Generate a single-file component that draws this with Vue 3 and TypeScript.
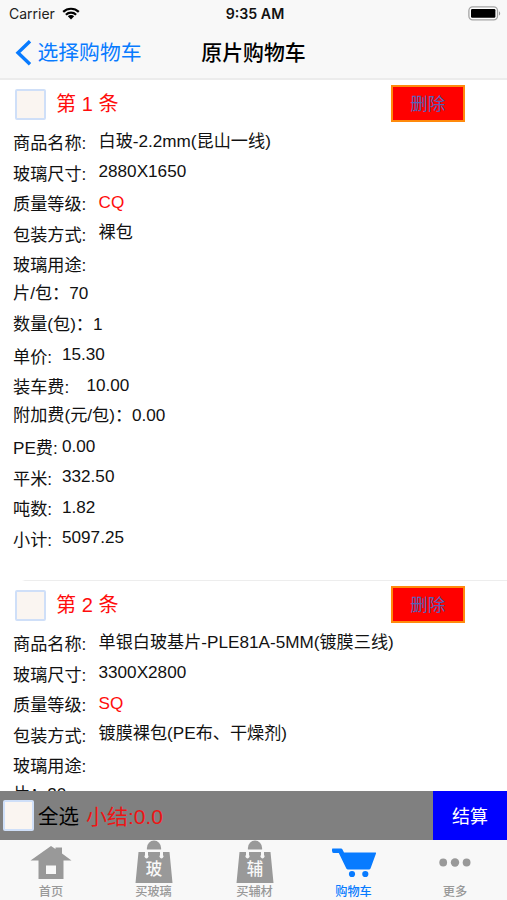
<script setup lang="ts">
import { ref } from 'vue'

interface Field {
  label: string
  value: string
  kind: 'wide' | 'narrow' | 'fee' | 'inline'
  highlight?: boolean
}

interface CartItem {
  id: number
  checked: boolean
  fields: Field[]
}

const items = ref<CartItem[]>([
  {
    id: 1,
    checked: false,
    fields: [
      { label: '商品名称:', value: '白玻-2.2mm(昆山一线)', kind: 'wide' },
      { label: '玻璃尺寸:', value: '2880X1650', kind: 'wide' },
      { label: '质量等级:', value: 'CQ', kind: 'wide', highlight: true },
      { label: '包装方式:', value: '裸包', kind: 'wide' },
      { label: '玻璃用途:', value: '', kind: 'wide' },
      { label: '片/包：', value: '70', kind: 'inline' },
      { label: '数量(包)：', value: '1', kind: 'inline' },
      { label: '单价:', value: '15.30', kind: 'narrow' },
      { label: '装车费:', value: '10.00', kind: 'fee' },
      { label: '附加费(元/包)：', value: '0.00', kind: 'inline' },
      { label: 'PE费:', value: '0.00', kind: 'narrow' },
      { label: '平米:', value: '332.50', kind: 'narrow' },
      { label: '吨数:', value: '1.82', kind: 'narrow' },
      { label: '小计:', value: '5097.25', kind: 'narrow' },
    ],
  },
  {
    id: 2,
    checked: false,
    fields: [
      { label: '商品名称:', value: '单银白玻基片-PLE81A-5MM(镀膜三线)', kind: 'wide' },
      { label: '玻璃尺寸:', value: '3300X2800', kind: 'wide' },
      { label: '质量等级:', value: 'SQ', kind: 'wide', highlight: true },
      { label: '包装方式:', value: '镀膜裸包(PE布、干燥剂)', kind: 'wide' },
      { label: '玻璃用途:', value: '', kind: 'wide' },
      { label: '片：', value: '20', kind: 'inline' },
    ],
  },
])

const allChecked = ref(false)

function toggleAll() {
  allChecked.value = !allChecked.value
  items.value.forEach((item) => (item.checked = allChecked.value))
}

function removeItem(id: number) {
  items.value = items.value.filter((item) => item.id !== id)
}

const activeTab = ref('cart')
</script>

<template>
  <div class="screen">
    <header class="top">
      <div class="status">
        <div class="carrier">
          <span>Carrier</span>
          <svg class="wifi" viewBox="0 0 18 13" width="18" height="13">
            <path d="M1.2 4.9A11.2 11.2 0 0 1 16.8 4.9M3.9 7.7A7.3 7.3 0 0 1 14.1 7.7" fill="none" stroke="#000" stroke-width="2.2" />
            <path d="M9 12.4L5.8 9.2A4.6 4.6 0 0 1 12.2 9.2Z" fill="#000" />
          </svg>
        </div>
        <span class="time">9:35 AM</span>
        <svg class="battery" viewBox="0 0 33 15" width="33" height="15">
          <rect x="0.9" y="0.9" width="28.6" height="13" rx="3.8" fill="#fff" stroke="#a3a3a3" stroke-width="1.3" />
          <rect x="3" y="3" width="24.4" height="8.8" rx="1.2" fill="#000" />
          <path d="M31 5.2C32.6 6 32.6 8.8 31 9.6Z" fill="#999" />
        </svg>
      </div>
      <nav class="navbar">
        <a class="back">
          <svg viewBox="0 0 17 26" width="17" height="26">
            <path d="M15 1.2L3 12.7L15 24.2" fill="none" stroke="#087bff" stroke-width="3.4" />
          </svg>
          <span>选择购物车</span>
        </a>
        <h1 class="title">原片购物车</h1>
      </nav>
    </header>

    <main class="list">
      <article v-for="item in items" :key="item.id" class="item">
        <div class="item-head">
          <span class="check" @click="item.checked = !item.checked">{{ item.checked ? '✓' : '' }}</span>
          <span class="item-title">第 {{ item.id }} 条</span>
          <button class="delete" @click="removeItem(item.id)">删除</button>
        </div>
        <dl class="fields">
          <div v-for="field in item.fields" :key="field.label" class="field" :class="field.kind">
            <dt>{{ field.label }}</dt>
            <dd :class="{ highlight: field.highlight }">{{ field.value }}</dd>
          </div>
        </dl>
      </article>
    </main>

    <section class="summary">
      <span class="check" @click="toggleAll">{{ allChecked ? '✓' : '' }}</span>
      <span class="all">全选</span>
      <span class="total">小结:0.0</span>
      <button class="pay">结算</button>
    </section>

    <footer class="tabs">
      <a class="tab" :class="{ active: activeTab === 'home' }" @click="activeTab = 'home'">
        <svg viewBox="0 0 42 44" width="42" height="44">
          <path d="M21 6L25.5 9V7.5H32V13.5L41.5 20.5H33.5V39H8.5V20.5H0.5Z M16 25.5V34H26V25.5Z" fill="currentColor" fill-rule="evenodd" />
        </svg>
        <span>首页</span>
      </a>
      <a class="tab" :class="{ active: activeTab === 'glass' }" @click="activeTab = 'glass'">
        <svg viewBox="0 0 42 44" width="42" height="44">
          <path d="M13.9 9.5V8A7.1 7.5 0 0 1 28.1 8V9.5Z" fill="currentColor" />
          <path d="M5.5 12H12V15A2 2 0 1 0 15 15V12H27V15A2 2 0 1 0 30 15V12H36.5L39.5 43H2.5Z" fill="currentColor" />
          <text x="21" y="35" class="glyph">玻</text>
        </svg>
        <span>买玻璃</span>
      </a>
      <a class="tab" :class="{ active: activeTab === 'material' }" @click="activeTab = 'material'">
        <svg viewBox="0 0 42 44" width="42" height="44">
          <path d="M13.9 9.5V8A7.1 7.5 0 0 1 28.1 8V9.5Z" fill="currentColor" />
          <path d="M5.5 12H12V15A2 2 0 1 0 15 15V12H27V15A2 2 0 1 0 30 15V12H36.5L39.5 43H2.5Z" fill="currentColor" />
          <text x="21" y="35" class="glyph">辅</text>
        </svg>
        <span>买辅材</span>
      </a>
      <a class="tab" :class="{ active: activeTab === 'cart' }" @click="activeTab = 'cart'">
        <svg viewBox="0 0 46 44" width="46" height="44">
          <path d="M1.5 8.5H10Q11 8.5 11.5 9.5L13 12.5H44.5Q45.5 12.5 45 13.5L39.5 28.5Q39 29.5 38 29.5H17Q16 29.5 15.3 28.5L7.8 13H2.5Q1 13 1 10.5T1.5 8.5Z" fill="currentColor" />
          <circle cx="21" cy="34" r="3.1" fill="currentColor" />
          <circle cx="34.3" cy="34" r="3.1" fill="currentColor" />
        </svg>
        <span>购物车</span>
      </a>
      <a class="tab" :class="{ active: activeTab === 'more' }" @click="activeTab = 'more'">
        <svg viewBox="0 0 42 44" width="42" height="44">
          <circle cx="9.2" cy="22.5" r="3.9" fill="currentColor" />
          <circle cx="21" cy="22.5" r="4.2" fill="currentColor" />
          <circle cx="32.6" cy="22.5" r="3.9" fill="currentColor" />
        </svg>
        <span>更多</span>
      </a>
    </footer>
  </div>
</template>

<style>
body {
  margin: 0;
  background: #fff;
}
</style>

<style scoped>
.screen {
  display: flex;
  flex-direction: column;
  height: 900px;
  overflow: hidden;
  background: #fff;
  color: #111;
  font-family: 'Liberation Sans', 'Noto Sans CJK SC', sans-serif;
}

.top {
  flex: none;
  box-sizing: border-box;
  height: 80px;
  background: #f8f8f8;
  border-bottom: 2px solid #ececec;
}

.status {
  display: grid;
  grid-template-columns: 1fr auto 1fr;
  align-items: center;
  height: 27px;
  padding: 0 6px 0 9px;
  font-family: Inter, 'Liberation Sans', sans-serif;
  font-size: 14px;
  color: #222;
}

.carrier {
  display: flex;
  align-items: center;
  gap: 7px;
}

.time {
  font-weight: 600;
  font-size: 14.2px;
  color: #111;
}

.battery {
  justify-self: end;
}

.navbar {
  display: grid;
  grid-template-columns: 1fr auto 1fr;
  align-items: center;
  height: 51px;
  padding-left: 15px;
  padding-right: 15px;
}

.back {
  display: flex;
  align-items: center;
  gap: 5.5px;
  color: #087bff;
  font-size: 20.8px;
  line-height: 30px;
  white-space: nowrap;
}

.title {
  margin: 0;
  font-size: 20.9px;
  font-weight: 500;
  line-height: 30px;
  color: #000;
}

.list {
  flex: 1;
  min-height: 0;
  overflow: hidden;
}

.item {
  box-sizing: border-box;
  height: 501px;
}

.item + .item {
  border-top: 1px solid transparent;
  border-image: linear-gradient(to right, #fff 23px, #ededed 26px) 1;
  margin-top: -1px;
}

.item-head {
  display: flex;
  align-items: center;
  height: 48px;
  padding-left: 15px;
}

.check {
  flex: none;
  box-sizing: border-box;
  width: 31px;
  height: 31px;
  border: 2px solid #cfdff8;
  border-radius: 2px;
  background: #faf5f1;
  text-align: center;
  line-height: 27px;
}

.item-title {
  flex: none;
  width: 335px;
  margin-left: 10px;
  font-size: 20.1px;
  line-height: 28px;
  color: #ff0d0d;
}

.delete {
  box-sizing: border-box;
  width: 73.5px;
  height: 37px;
  margin-bottom: 2px;
  padding: 0 0 2px;
  border: 2px solid #ff8a0c;
  background: #f00;
  color: #5560b8;
  font-family: inherit;
  font-size: 17.6px;
}

.fields {
  margin: -2.5px 0 0;
  padding: 0 0 0 13px;
  font-size: 17.15px;
  line-height: 30.54px;
}

.field {
  display: flex;
  height: 30.54px;
  white-space: nowrap;
}

.field dt {
  flex: none;
  padding-top: 2.5px;
}

.field dd {
  margin: 0;
}

.wide dt {
  width: 85.5px;
}

.narrow dt {
  width: 49px;
}

.fee dt {
  width: 73.5px;
}

.inline dt {
  padding-top: 0;
}

.field .highlight {
  color: #ff0d0d;
}

.summary {
  flex: none;
  display: flex;
  align-items: center;
  height: 49px;
  padding-left: 3px;
  background: #808080;
  font-size: 20.5px;
}

.all {
  margin: 0 0 2px 4px;
  color: #000;
}

.total {
  margin: 0 0 2px 7px;
  color: #ee1515;
  font-size: 21px;
}

.pay {
  align-self: stretch;
  width: 74px;
  margin-left: auto;
  padding: 0 0 2px;
  border: 0;
  background: #00f;
  color: #fff;
  font-family: inherit;
  font-size: 18px;
}

.tabs {
  flex: none;
  display: grid;
  grid-template-columns: 102px 103px 99px 99px 104px;
  height: 60px;
  background: #f8f8f8;
}

.tab {
  display: flex;
  flex-direction: column;
  align-items: center;
  color: #999;
  font-size: 12.2px;
  font-weight: 500;
  line-height: 16px;
}

.tab svg {
  display: block;
  flex: none;
}

.tab.active {
  color: #087bff;
}

.glyph {
  fill: #f8f8f8;
  font-size: 16.5px;
  text-anchor: middle;
}
</style>
